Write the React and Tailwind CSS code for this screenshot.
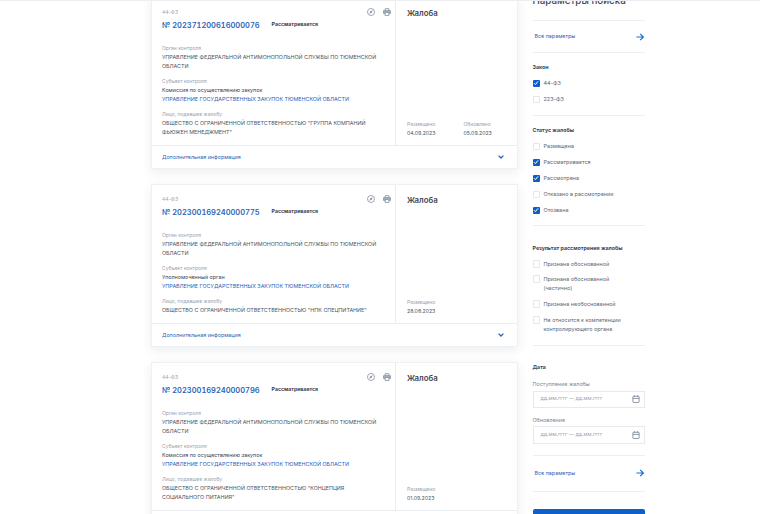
const BLUE = "text-[#2a62b8]";
function Compass() {
  return (
    <svg width="8" height="8" viewBox="0 0 10 10" fill="none" stroke="#8a94a3" strokeWidth="1">
      <circle cx="5" cy="5" r="4.4" />
      <path d="M7.2 2.8 5.8 5.8 2.8 7.2 4.2 4.2Z" fill="#8a94a3" stroke="none" />
    </svg>
  );
}
function Printer() {
  return (
    <svg width="8" height="8" viewBox="0 0 10 10" fill="none" stroke="#8a94a3" strokeWidth="1">
      <path d="M2.7 3V.8h4.6V3" />
      <rect x="0.6" y="3" width="8.8" height="4.2" rx="0.8" fill="#a5adb9" />
      <rect x="2.7" y="5.8" width="4.6" height="3.6" fill="#fff" />
    </svg>
  );
}
function Chevron() {
  return (
    <svg width="6" height="4" viewBox="0 0 6 4" fill="none" stroke="#2a62b8" strokeWidth="1.3">
      <path d="M.6.6 3 3 5.4.6" />
    </svg>
  );
}
function Arrow() {
  return (
    <svg width="8" height="8" viewBox="0 0 8 8" fill="none" stroke="#1f6fd6" strokeWidth="1.2">
      <path d="M0.4 4H7.3M4.2 .9 7.3 4 4.2 7.1" />
    </svg>
  );
}
function Cal() {
  return (
    <svg width="8" height="8" viewBox="0 0 9 9" fill="none" stroke="#76808f" strokeWidth="0.9">
      <rect x="1" y="1.4" width="7" height="7" rx="0.6" />
      <path d="M1 3.8H8M2.8.4V2M6.2.4V2" />
    </svg>
  );
}
function Label({ children }) {
  return <div className="text-[5px] leading-[9px] text-[#9aa2ae]">{children}</div>;
}
function Body({ children, className = "text-[#4b5563]" }) {
  return <div className={`text-[5.37px] leading-[9px] ${className}`}>{children}</div>;
}
function Card({ num, subject, person, dates, h }) {
  return (
    <div className={`flex flex-col bg-white border border-[#eef0f3] shadow-[0_3px_10px_rgba(40,60,90,0.09)] ${h}`}>
      <div className="flex flex-1 min-h-0">
        <div className="w-[244px] shrink-0 border-r border-[#e9ecf0] pl-[10px] pr-[10px] pt-[10px] relative">
          <div className="absolute right-[4px] top-[10px] flex gap-[8px]">
            <Compass />
            <Printer />
          </div>
          <Label>44-ФЗ</Label>
          <div className="flex items-center mt-[1px] h-[15px] mb-[1px]">
            <span className={`text-[7.5px] font-semibold tabular-nums ${BLUE}`}>№ {num}</span>
            <span className="ml-[12px] -mt-[1px] text-[5.2px] font-bold text-[#374151]">Рассматривается</span>
          </div>
          <div className="mt-[11px]"><Label>Орган контроля</Label></div>
          <Body>УПРАВЛЕНИЕ ФЕДЕРАЛЬНОЙ АНТИМОНОПОЛЬНОЙ СЛУЖБЫ ПО ТЮМЕНСКОЙ ОБЛАСТИ</Body>
          <div className="mt-[6px]"><Label>Субъект контроля</Label></div>
          <Body className="text-[#374151]">{subject}</Body>
          <Body className={BLUE}>УПРАВЛЕНИЕ ГОСУДАРСТВЕННЫХ ЗАКУПОК ТЮМЕНСКОЙ ОБЛАСТИ</Body>
          <div className="mt-[6px]"><Label>Лицо, подавшее жалобу</Label></div>
          <Body>{person}</Body>
        </div>
        <div className="flex-1 flex flex-col justify-between pl-[11px] pt-[9px] pb-[7.5px]">
          <div className="text-[7.8px] leading-[12px] font-semibold text-[#3f4652]">Жалоба</div>
          <div className="flex gap-[28px]">
            {dates.map(([l, d]) => (
              <div key={l}>
                <Label>{l}</Label>
                <div className="text-[5.2px] leading-[9px] text-[#4b5563]">{d}</div>
              </div>
            ))}
          </div>
        </div>
      </div>
      <div className="h-[23px] shrink-0 border-t border-[#e9ecf0] flex items-center justify-between pl-[10px] pr-[13px]">
        <span className={`text-[5.37px] ${BLUE}`}>Дополнительная информация</span>
        <Chevron />
      </div>
    </div>
  );
}
function Check({ label, on, className = "" }) {
  return (
    <div className={`flex gap-[3.5px] items-start ${className}`}>
      <div className={`w-[7.5px] h-[7.5px] mt-[0.7px] shrink-0 rounded-[1px] flex items-center justify-center ${on ? "bg-[#0d5fc9]" : "bg-white border border-[#e3e6ea]"}`}>
        {on && (
          <svg width="6" height="6" viewBox="0 0 6 6" fill="none" stroke="#fff" strokeWidth="1">
            <path d="M1 3.2 2.4 4.6 5 1.4" />
          </svg>
        )}
      </div>
      <span className="text-[5.45px] leading-[9px] text-[#5b6472]">{label}</span>
    </div>
  );
}
function Title({ children }) {
  return <div className="text-[5.3px] leading-[9px] font-bold text-[#3f4652]">{children}</div>;
}
function AllParams() {
  return (
    <div className="flex items-center justify-between pl-[2px] pr-[1px]">
      <span className={`text-[5.37px] leading-[9px] ${BLUE}`}>Все параметры</span>
      <Arrow />
    </div>
  );
}
function DateField({ label }) {
  return (
    <div>
      <div className="text-[5.4px] leading-[9px] text-[#7b8491] mb-[1.5px]">{label}</div>
      <div className="h-[17.5px] border border-[#e6e9ed] flex items-center justify-between pl-[7px] pr-[4px]">
        <span className="text-[5.2px] text-[#9aa2ae]">дд.мм.гггг — дд.мм.гггг</span>
        <Cal />
      </div>
    </div>
  );
}
export default function App() {
  return (
    <div className="h-[514px] w-[760px] overflow-hidden bg-white border-t border-[#eceef1]" style={{ fontFamily: "Inter, 'Noto Sans', sans-serif" }}>
      <div className="flex pl-[151px] items-start">
        <div className="w-[367px] shrink-0 flex flex-col gap-[15px] -mt-[4px]">
          <Card h="h-[172px]" num="202371200616000076"
            subject="Комиссия по осуществлению закупок"
            person="ОБЩЕСТВО С ОГРАНИЧЕННОЙ ОТВЕТСТВЕННОСТЬЮ &quot;ГРУППА КОМПАНИЙ ФЬЮЖЕН МЕНЕДЖМЕНТ&quot;"
            dates={[["Размещено", "04.09.2023"], ["Обновлено", "05.09.2023"]]} />
          <Card h="h-[163px]" num="202300169240000775"
            subject="Уполномоченный орган"
            person="ОБЩЕСТВО С ОГРАНИЧЕННОЙ ОТВЕТСТВЕННОСТЬЮ &quot;НПК СПЕЦПИТАНИЕ&quot;"
            dates={[["Размещено", "28.08.2023"]]} />
          <Card h="h-[172px]" num="202300169240000796"
            subject="Комиссия по осуществлению закупок"
            person="ОБЩЕСТВО С ОГРАНИЧЕННОЙ ОТВЕТСТВЕННОСТЬЮ &quot;КОНЦЕПЦИЯ СОЦИАЛЬНОГО ПИТАНИЯ&quot;"
            dates={[["Размещено", "01.09.2023"]]} />
        </div>
        <div className="w-[112px] ml-[14.5px] shrink-0 -mt-[6px]">
          <div className="text-[9.8px] leading-[12px] font-medium text-[#3f4652] pb-[13px] border-b border-[#eceef1]">Параметры поиска</div>
          <div className="py-[11px] border-b border-[#eceef1]"><AllParams /></div>
          <div className="pt-[10px] pb-[11px] border-b border-[#eceef1]">
            <Title>Закон</Title>
            <div className="flex flex-col gap-[7px] mt-[7px]">
              <Check on label="44-ФЗ" />
              <Check label="223-ФЗ" />
            </div>
          </div>
          <div className="pt-[10px] pb-[10px] border-b border-[#eceef1]">
            <Title>Статус жалобы</Title>
            <div className="flex flex-col gap-[7px] mt-[7px]">
              <Check label="Размещена" />
              <Check on label="Рассматривается" />
              <Check on label="Рассмотрена" />
              <Check label="Отказано в рассмотрении" />
              <Check on label="Отозвана" />
            </div>
          </div>
          <div className="pt-[17.5px] pb-[11.5px] border-b border-[#eceef1]">
            <Title>Результат рассмотрения жалобы</Title>
            <div className="flex flex-col gap-[7px] mt-[7px]">
              <Check label="Признана обоснованной" />
              <Check className="-mt-[1px]" label={<>Признана обоснованной<br />(частично)</>} />
              <Check label="Признана необоснованной" />
              <Check label={<>Не относится к компетенции<br />контролирующего органа</>} />
            </div>
          </div>
          <div className="pt-[17px] pb-[11px] border-b border-[#eceef1]">
            <Title>Дата</Title>
            <div className="flex flex-col gap-[7.5px] mt-[8px]">
              <DateField label="Поступление жалобы" />
              <DateField label="Обновление" />
            </div>
          </div>
          <div className="py-[13px] border-b border-[#eceef1]"><AllParams /></div>
          <div className="mt-[17px] h-[30px] bg-[#0d5fc9] rounded-[2px]"></div>
        </div>
      </div>
    </div>
  );
}
